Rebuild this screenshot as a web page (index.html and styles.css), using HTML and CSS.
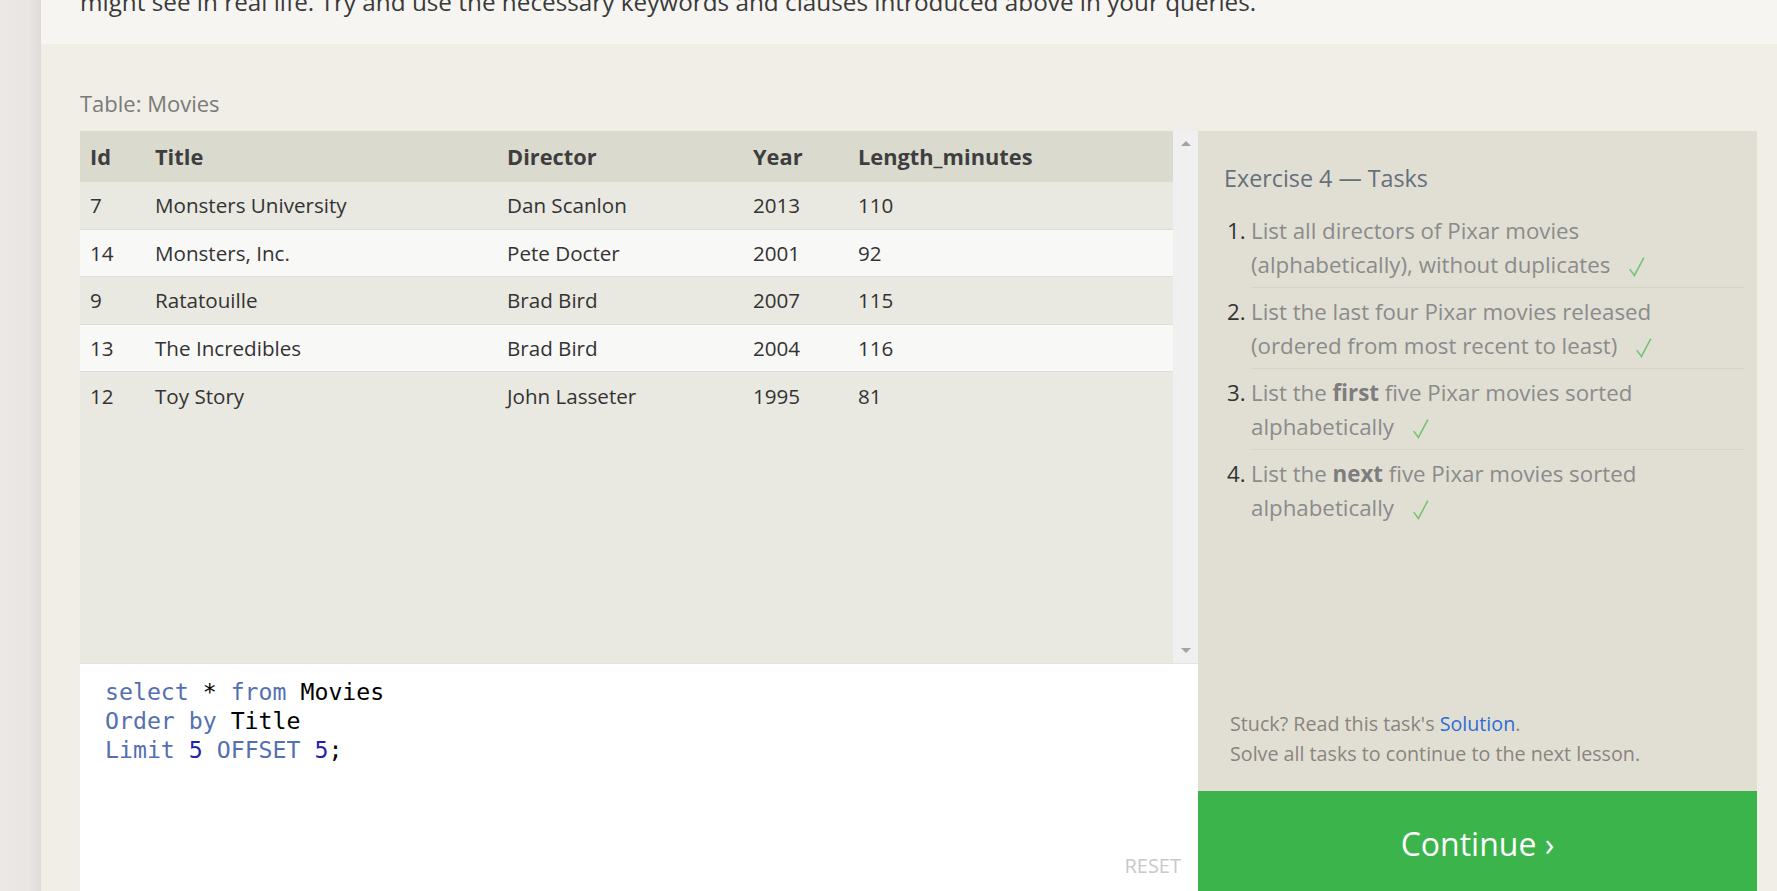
FILE: index.html
```html
<!DOCTYPE html>
<html lang="en">
<head>
<meta charset="utf-8">
<title>SQL Lesson — Exercise 4</title>
<link rel="stylesheet" href="styles.css">
</head>
<body>
<div class="strip"></div>
<div class="page">
  <div class="intro">
    <p>might see in real life. Try and use the necessary keywords and clauses introduced above in your queries.</p>
  </div>
  <section class="exercise">
    <div class="table-label">Table: Movies</div>
    <div class="workspace">
      <div class="left-col">
        <div class="results">
          <div class="results-table">
            <table>
              <colgroup>
                <col class="c-id"><col class="c-title"><col class="c-dir"><col class="c-year"><col class="c-len">
              </colgroup>
              <thead>
                <tr><th>Id</th><th>Title</th><th>Director</th><th>Year</th><th>Length_minutes</th></tr>
              </thead>
              <tbody>
                <tr><td>7</td><td>Monsters University</td><td>Dan Scanlon</td><td>2013</td><td>110</td></tr>
                <tr><td>14</td><td>Monsters, Inc.</td><td>Pete Docter</td><td>2001</td><td>92</td></tr>
                <tr><td>9</td><td>Ratatouille</td><td>Brad Bird</td><td>2007</td><td>115</td></tr>
                <tr><td>13</td><td>The Incredibles</td><td>Brad Bird</td><td>2004</td><td>116</td></tr>
                <tr><td>12</td><td>Toy Story</td><td>John Lasseter</td><td>1995</td><td>81</td></tr>
              </tbody>
            </table>
          </div>
          <div class="scrollbar">
            <span class="arrow up"></span>
            <span class="arrow down"></span>
          </div>
        </div>
        <div class="editor">
          <pre class="code"><span class="kw">select</span> * <span class="kw">from</span> Movies
<span class="kw">Order by</span> Title
<span class="kw">Limit</span> <span class="num">5</span> <span class="kw">OFFSET</span> <span class="num">5</span>;</pre>
          <span class="reset">RESET</span>
        </div>
      </div>
      <div class="right-col">
        <div class="tasks">
          <h3 class="tasks-title">Exercise 4 — Tasks</h3>
          <ol class="task-list">
            <li><span class="n">1.</span><div class="t">List all directors of Pixar movies (alphabetically), without duplicates<svg class="check" viewBox="0 0 16 20"><polyline points="1.5,12.5 6,18.5 15,1.5"/></svg></div></li>
            <li><span class="n">2.</span><div class="t">List the last four Pixar movies released (ordered from most recent to least)<svg class="check" viewBox="0 0 16 20"><polyline points="1.5,12.5 6,18.5 15,1.5"/></svg></div></li>
            <li><span class="n">3.</span><div class="t">List the <strong>first</strong> five Pixar movies sorted alphabetically<svg class="check" viewBox="0 0 16 20"><polyline points="1.5,12.5 6,18.5 15,1.5"/></svg></div></li>
            <li><span class="n">4.</span><div class="t">List the <strong>next</strong> five Pixar movies sorted alphabetically<svg class="check" viewBox="0 0 16 20"><polyline points="1.5,12.5 6,18.5 15,1.5"/></svg></div></li>
          </ol>
          <div class="stuck">
            <div>Stuck? Read this task's <a href="#">Solution</a>.</div>
            <div>Solve all tasks to continue to the next lesson.</div>
          </div>
        </div>
        <div class="continue">Continue ›</div>
      </div>
    </div>
  </section>
</div>
</body>
</html>
```
FILE: styles.css
```css
html, body {
  margin: 0;
  padding: 0;
  height: 891px;
  overflow: hidden;
}
body {
  display: flex;
  font-family: "Open Sans", "Liberation Sans", sans-serif;
  background: #e9e6e3;
}
.strip {
  width: 41px;
  flex: none;
  background: linear-gradient(to right, #ebe8e5 0%, #e8e5e2 70%, #dedbd8 100%);
}
.page {
  flex: 1;
  background: #f6f5f1;
  display: flex;
  flex-direction: column;
}
.intro {
  height: 44px;
  overflow: hidden;
  padding-left: 39px;
}
.intro p {
  margin: -16px 0 0;
  font-size: 24.3px;
  line-height: 36px;
  color: #3a3a3a;
  white-space: nowrap;
}
.exercise {
  flex: 1;
  background: #f0eee7;
  padding: 44px 20px 0 39px;
}
.table-label {
  font-size: 22px;
  line-height: 30px;
  color: #7a7a7a;
  margin-bottom: 13px;
}
.workspace {
  display: grid;
  grid-template-columns: 1118px 559px;
}
.left-col {
  display: flex;
  flex-direction: column;
}
.results {
  display: flex;
  height: 532px;
}
.results-table {
  flex: 1;
  background: #e9e8e1;
}
table {
  width: 100%;
  border-collapse: collapse;
  table-layout: fixed;
  font-size: 20.6px;
  color: #333;
}
.c-id { width: 65px; }
.c-title { width: 352px; }
.c-dir { width: 246px; }
.c-year { width: 105px; }
th {
  background: #dbdacf;
  text-align: left;
  font-weight: 700;
  color: #3e3e3e;
  height: 51px;
  padding: 0 0 0 10px;
  font-size: 21.8px;
}
td {
  height: 46.6px;
  padding: 0 0 0 10px;
  border-bottom: 1px solid #dedcd6;
  white-space: nowrap;
}
tbody tr:nth-child(odd) td { background: #e9e8e1; }
tbody tr:nth-child(even) td { background: #f8f8f7; }
tbody tr:last-child td { border-bottom: none; }
.scrollbar {
  width: 25px;
  background: #f0f0f0;
  display: flex;
  flex-direction: column;
  justify-content: space-between;
  align-items: center;
  padding: 10px 0 10px;
  box-sizing: border-box;
}
.arrow {
  width: 0;
  height: 0;
  border-left: 5px solid transparent;
  border-right: 5px solid transparent;
}
.arrow.up { border-bottom: 5px solid #a3a3a3; }
.arrow.down { border-top: 5px solid #a3a3a3; }
.editor {
  flex: 1;
  background: #fff;
  position: relative;
  border-top: 1px solid #e4e3de;
}
.code {
  margin: 0;
  padding: 13px 0 0 25px;
  font-family: "DejaVu Sans Mono", "Liberation Mono", monospace;
  font-size: 23.2px;
  line-height: 29px;
  color: #000;
}
.kw { color: #5470b0; }
.num { color: #1f1fb0; }
.reset {
  position: absolute;
  right: 17px;
  top: 188px;
  font-size: 20px;
  color: #c9c9c9;
}
.right-col {
  display: flex;
  flex-direction: column;
}
.tasks {
  height: 660px;
  background: #e1dfd4;
  box-sizing: border-box;
  padding: 32px 12px 22px 26px;
  display: flex;
  flex-direction: column;
}
.tasks-title {
  margin: 0 0 21px;
  font-weight: 400;
  font-size: 23.3px;
  line-height: 30px;
  color: #66707a;
}
.task-list {
  list-style: none;
  margin: 0;
  padding: 0;
  font-size: 22.3px;
  line-height: 34px;
  color: #8b8b8b;
}
.task-list li {
  display: flex;
  margin-bottom: 7px;
}
.task-list .n {
  width: 27px;
  flex: none;
  color: #333;
  padding-left: 3px;
  box-sizing: border-box;
}
.task-list .t {
  flex: 1;
  padding: 0 50px 5px 0;
  border-bottom: 1px solid #d6d4ca;
}
.task-list li:last-child .t { border-bottom: none; }
.task-list strong { color: #7d7d7d; font-weight: 700; }
.check {
  width: 17px;
  height: 21px;
  margin-left: 18px;
  vertical-align: -4px;
  fill: none;
  stroke: #74c474;
  stroke-width: 1.5;
}
.stuck {
  margin-top: auto;
  padding-left: 6px;
  font-size: 19.7px;
  line-height: 30px;
  color: #8a847e;
}
.stuck a {
  color: #2d6cd6;
  text-decoration: none;
}
.continue {
  height: 100px;
  background: #3ab44b;
  color: #fff;
  font-size: 32px;
  display: flex;
  align-items: center;
  justify-content: center;
  padding-top: 4px;
  box-sizing: border-box;
}
```
